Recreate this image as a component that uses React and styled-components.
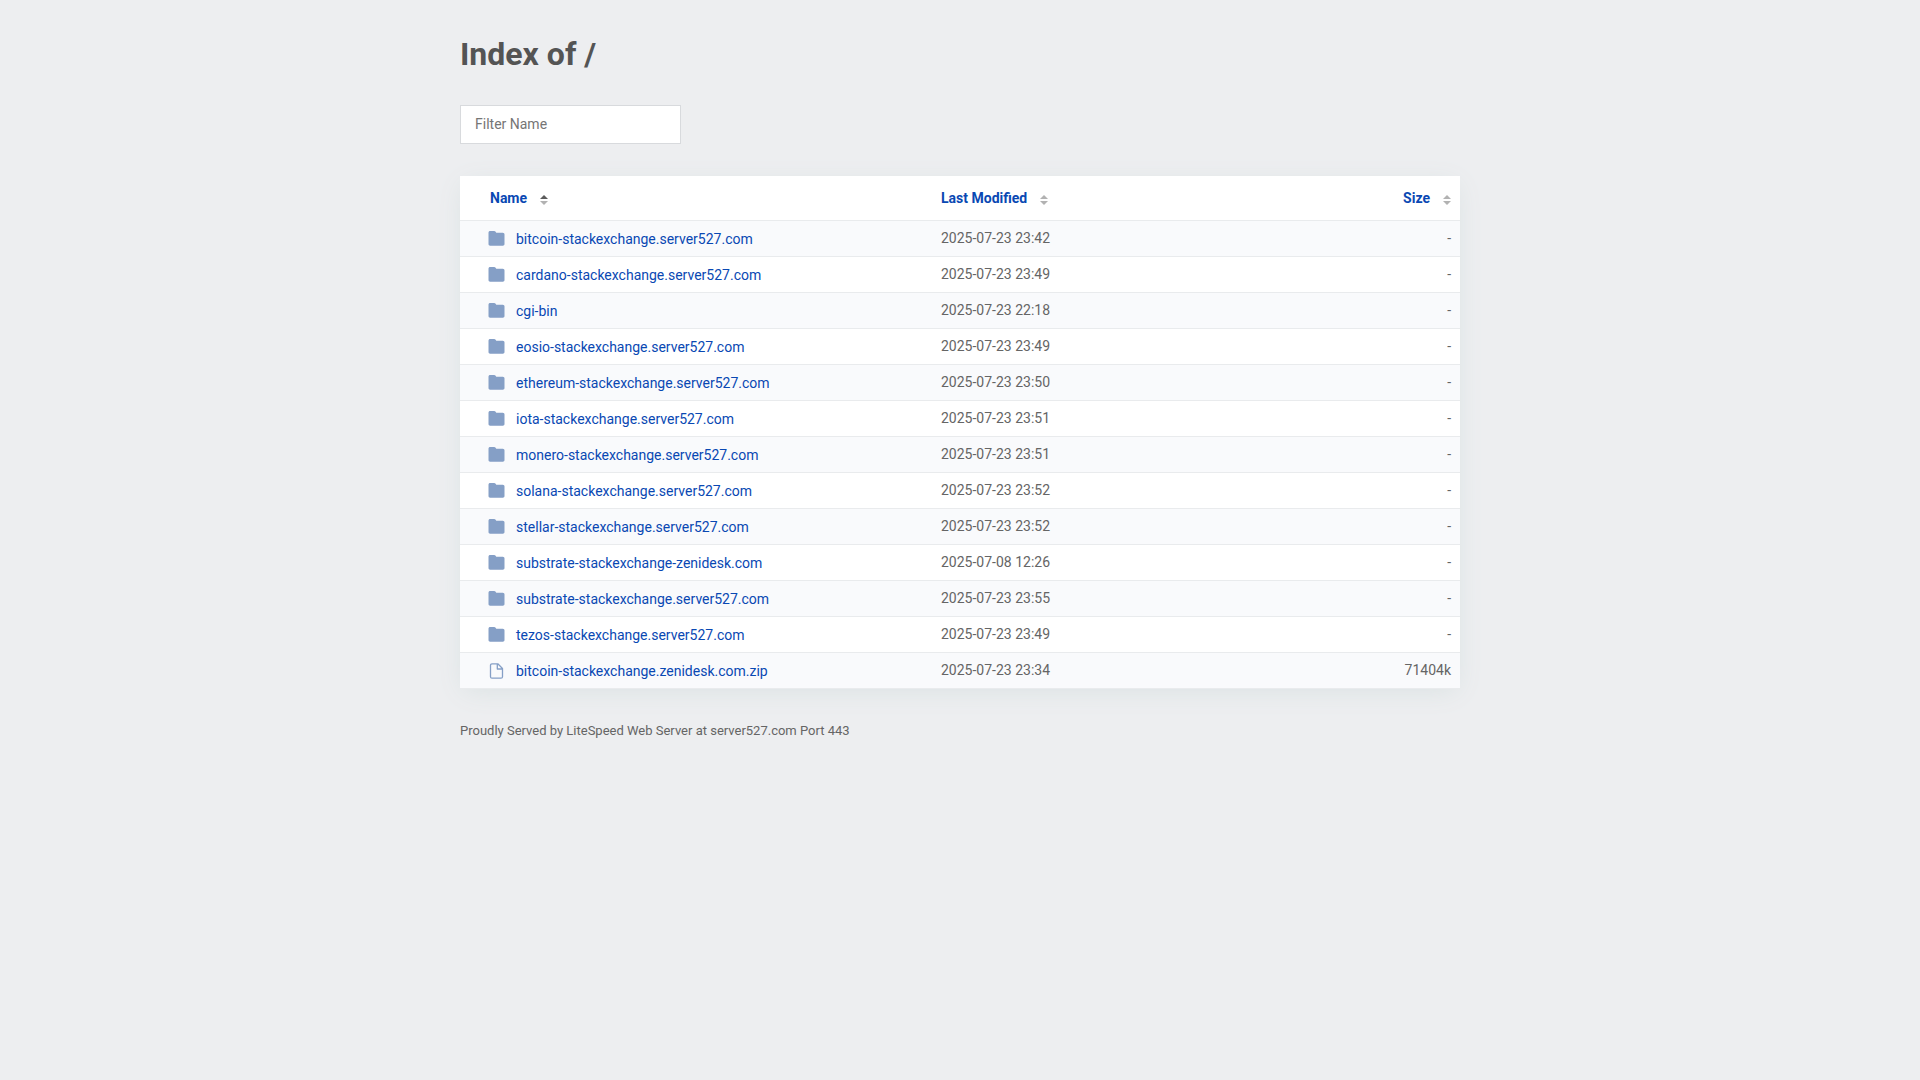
import React, { useState } from 'react'
import styled, { createGlobalStyle } from 'styled-components'

const GlobalStyle = createGlobalStyle`
  * {
    box-sizing: border-box;
  }
  body {
    margin: 0;
    background-color: #edeef0;
    color: #656565;
    font-family: Roboto, 'Liberation Sans', sans-serif;
    font-size: 14px;
    line-height: 20px;
  }
`

const Content = styled.main`
  max-width: 1040px;
  margin: 0 auto;
  padding: 32px 20px;
`

const Title = styled.h1`
  margin: 0 0 29px;
  color: #545454;
  font-size: 32px;
  line-height: 44px;
`

const FilterInput = styled.input`
  display: block;
  width: 221px;
  max-width: 100%;
  margin-bottom: 32px;
  padding: 8px 14px 9px;
  border: 1px solid #d8dadd;
  border-radius: 0;
  background-color: #ffffff;
  color: inherit;
  font: inherit;
  &::placeholder {
    color: #757575;
  }
`

const Listing = styled.table`
  width: 100%;
  table-layout: fixed;
  border-collapse: separate;
  border-spacing: 0;
  background-color: #ffffff;
  box-shadow: 0 5px 25px -4px #d9e1e2;
`

const HeadCell = styled.th`
  width: ${props => props.width};
  padding: 12px 9px 12px ${props => (props.$indent ? '30px' : '9px')};
  border-bottom: 1px solid #e9ebed;
  text-align: ${props => props.align || 'left'};
`

const SortButton = styled.button`
  display: inline-flex;
  align-items: center;
  gap: 13px;
  padding: 0;
  border: 0;
  background: none;
  color: #0948b3;
  font: inherit;
  cursor: pointer;
`

const SortSvg = styled.svg`
  margin-top: 4px;
`

const Row = styled.tr`
  &:nth-child(odd) {
    background-color: #f9fafc;
  }
`

const Cell = styled.td`
  padding: 7px 9px 8px;
  border-bottom: 1px solid #e9ebed;
  text-align: ${props => props.align || 'left'};
`

const NameCell = styled(Cell)`
  padding: 8px 9px 7px 28px;
`

const NameLink = styled.a`
  display: flex;
  align-items: center;
  gap: 11px;
  color: #0948b3;
  text-decoration: none;
  &:hover {
    text-decoration: underline;
  }
`

const Footer = styled.footer`
  margin-top: 32px;
  font-size: 13px;
`

const entries = [
  ['bitcoin-stackexchange.server527.com', '2025-07-23 23:42'],
  ['cardano-stackexchange.server527.com', '2025-07-23 23:49'],
  ['cgi-bin', '2025-07-23 22:18'],
  ['eosio-stackexchange.server527.com', '2025-07-23 23:49'],
  ['ethereum-stackexchange.server527.com', '2025-07-23 23:50'],
  ['iota-stackexchange.server527.com', '2025-07-23 23:51'],
  ['monero-stackexchange.server527.com', '2025-07-23 23:51'],
  ['solana-stackexchange.server527.com', '2025-07-23 23:52'],
  ['stellar-stackexchange.server527.com', '2025-07-23 23:52'],
  ['substrate-stackexchange-zenidesk.com', '2025-07-08 12:26'],
  ['substrate-stackexchange.server527.com', '2025-07-23 23:55'],
  ['tezos-stackexchange.server527.com', '2025-07-23 23:49'],
  ['bitcoin-stackexchange.zenidesk.com.zip', '2025-07-23 23:34', 71404]
].map(([name, modified, size = 0]) => ({ name, modified, size }))

const FolderIcon = () => (
  <svg width="17" height="16" viewBox="0 0 17 16" aria-hidden="true">
    <path
      fill="#859fc6"
      d="M2.200 0h4c.5 0 .9.2 1.200.6l.9 1.200h6.500c1 0 1.700.7 1.700 1.700v9.500c0 1-.7 1.700-1.700 1.700H2.200c-1 0-1.700-.7-1.700-1.700V1.700C.5.7 1.200 0 2.200 0z"
    />
  </svg>
)

const FileIcon = () => (
  <svg width="17" height="16" viewBox="0 0 17 16" aria-hidden="true">
    <path
      fill="none"
      stroke="#859fc6"
      strokeWidth="1.3"
      strokeLinejoin="round"
      d="M9.800.8H4c-.9 0-1.500.6-1.500 1.500v11.400c0 .9.6 1.500 1.500 1.500h9c.9 0 1.500-.6 1.500-1.500V5.500zM9.300.9v5.100h5.200"
    />
  </svg>
)

const SortIcon = ({ order }) => (
  <SortSvg width="8" height="10" viewBox="0 0 8 10" aria-hidden="true">
    <path d="M0 4L4 0l4 4z" fill={order === 'asc' ? '#5c5c5c' : '#b2b2b2'} />
    <path d="M0 6h8l-4 4z" fill={order === 'desc' ? '#5c5c5c' : '#b2b2b2'} />
  </SortSvg>
)

const columns = [
  { key: 'name', label: 'Name', width: '47.2%', indent: true },
  { key: 'modified', label: 'Last Modified', width: '32.8%' },
  { key: 'size', label: 'Size', width: '20%', align: 'right' }
]

const compare = (a, b) => (a < b ? -1 : a > b ? 1 : 0)

const App = () => {
  const [filter, setFilter] = useState('')
  const [sort, setSort] = useState({ key: 'name', order: 'asc' })

  const toggle = key =>
    setSort(prev => ({
      key,
      order: prev.key === key && prev.order === 'asc' ? 'desc' : 'asc'
    }))

  // folders always stay above files
  const rows = entries
    .filter(entry => entry.name.toLowerCase().includes(filter.toLowerCase()))
    .sort((a, b) => {
      const direction = sort.order === 'asc' ? 1 : -1
      return (
        compare(a.size > 0, b.size > 0) ||
        direction * compare(a[sort.key], b[sort.key])
      )
    })

  return (
    <>
      <GlobalStyle />
      <Content>
        <Title>Index of /</Title>
        <FilterInput
          type="text"
          aria-label="Filter Name"
          placeholder="Filter Name"
          value={filter}
          onChange={e => setFilter(e.target.value)}
        />
        <Listing>
          <thead>
            <tr>
              {columns.map(({ key, label, width, indent, align }) => (
                <HeadCell key={key} width={width} $indent={indent} align={align}>
                  <SortButton type="button" onClick={() => toggle(key)}>
                    {label}
                    <SortIcon order={sort.key === key ? sort.order : null} />
                  </SortButton>
                </HeadCell>
              ))}
            </tr>
          </thead>
          <tbody>
            {rows.map(({ name, modified, size }) => (
              <Row key={name}>
                <NameCell>
                  <NameLink href={`#${name}`}>
                    {size ? <FileIcon /> : <FolderIcon />}
                    {name}
                  </NameLink>
                </NameCell>
                <Cell>{modified}</Cell>
                <Cell align="right">{size ? `${size}k` : '-'}</Cell>
              </Row>
            ))}
          </tbody>
        </Listing>
        <Footer>
          Proudly Served by LiteSpeed Web Server at server527.com Port 443
        </Footer>
      </Content>
    </>
  )
}

export default App
